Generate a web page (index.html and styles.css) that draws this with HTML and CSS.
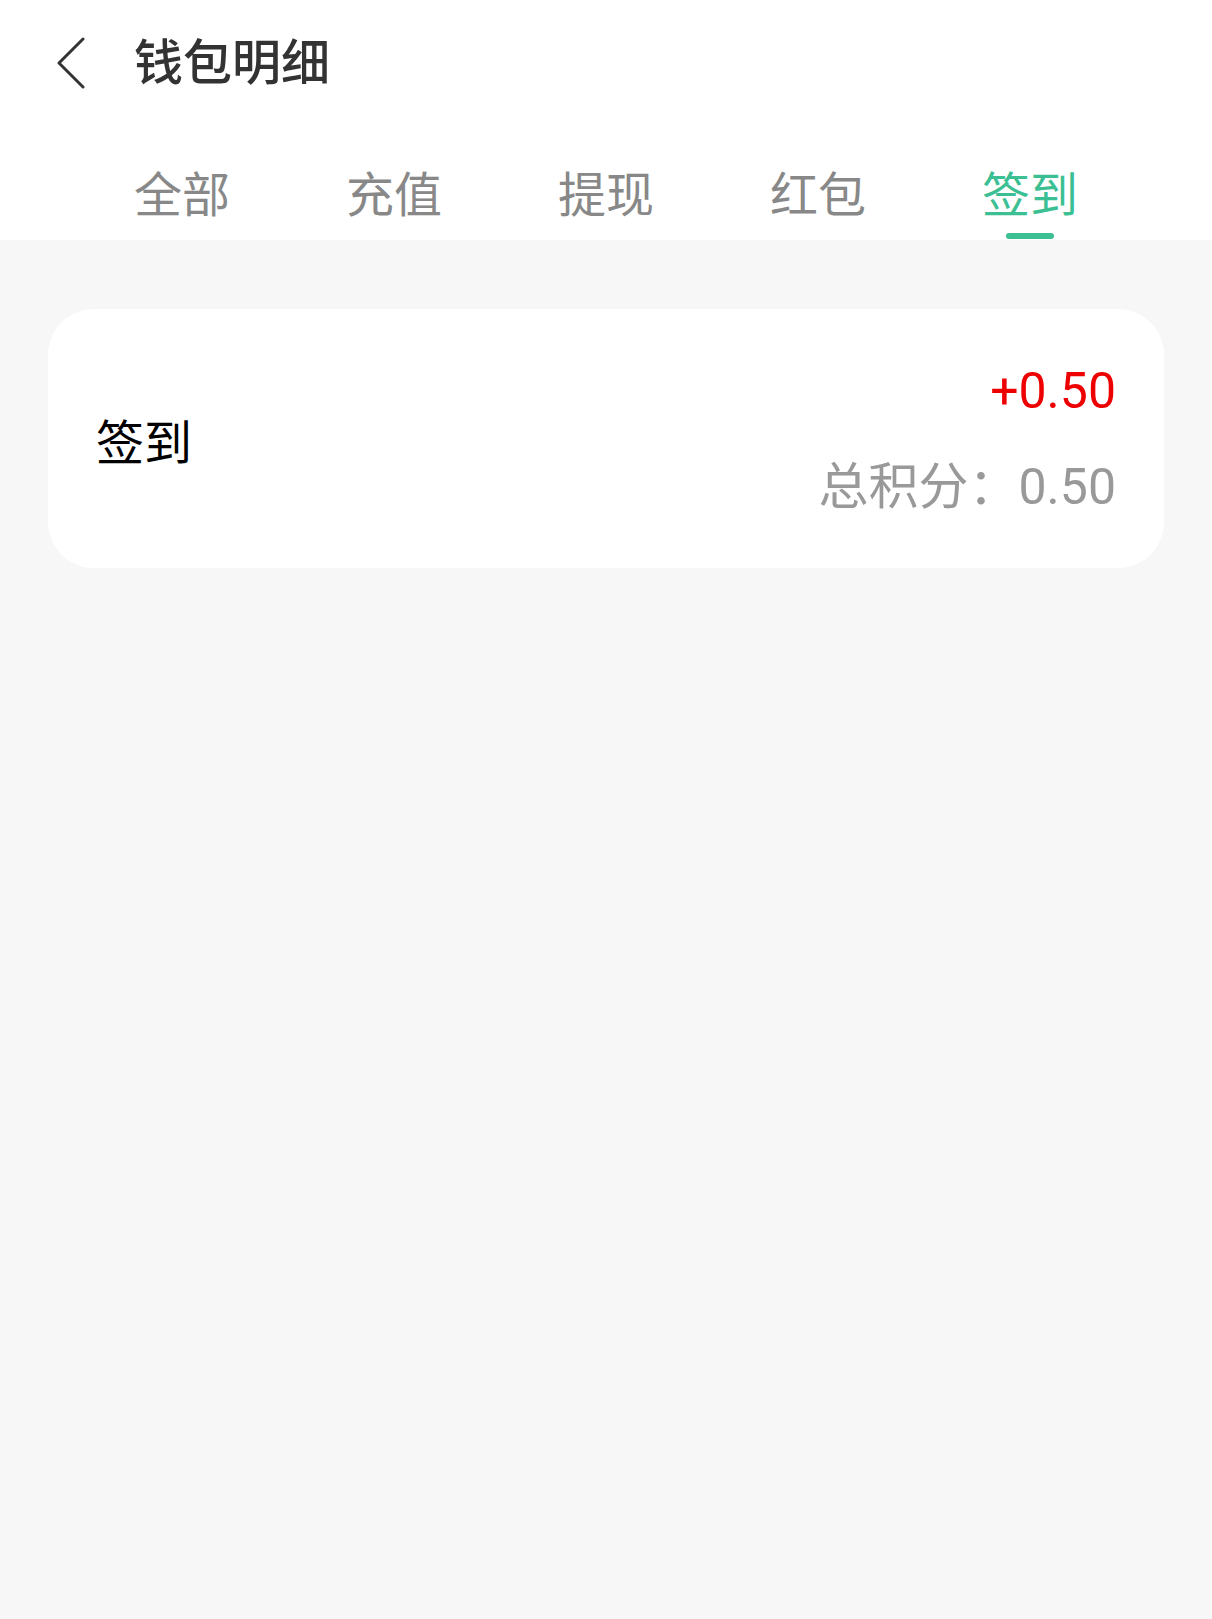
FILE: index.html
```html
<!DOCTYPE html>
<html lang="zh-CN">
  <head>
    <meta charset="UTF-8" />
    <meta name="viewport" content="width=device-width, initial-scale=1.0" />
    <title>钱包明细</title>
    <link rel="stylesheet" href="styles.css">
  </head>
  <body>
    <div class="header">
      <div class="nav-bar">
        <span class="back-btn">
          <svg width="32" height="52" viewBox="0 0 32 52">
            <polyline points="28,2 4,26 28,50" fill="none" stroke="#333" stroke-width="3" stroke-linecap="round" stroke-linejoin="round" />
          </svg>
        </span>
        <h1 class="title">钱包明细</h1>
      </div>

      <div class="tabs">
        <div class="tab">全部</div>
        <div class="tab">充值</div>
        <div class="tab">提现</div>
        <div class="tab">红包</div>
        <div class="tab active">签到</div>
      </div>
    </div>

    <div class="list">
      <div class="record">
        <div class="record-name">签到</div>
        <div class="record-right">
          <div class="amount">+0.50</div>
          <div class="total">总积分：0.50</div>
        </div>
      </div>
    </div>
  </body>
</html>
```

FILE: styles.css
```css
body {
  margin: 0;
  font-family: Roboto, "Noto Sans CJK SC", sans-serif;
  background: #f7f7f7;
  min-height: 100vh;
}

.header {
  background: white;
}

.nav-bar {
  height: 126px;
  display: flex;
  align-items: center;
  padding-left: 55px;
}

.back-btn {
  display: flex;
  width: 32px;
  margin-right: 47px;
}

.title {
  margin: 0;
  font-size: 49px;
  font-weight: 500;
  color: #333;
  line-height: 1;
}

.tabs {
  display: flex;
  padding: 36px 76px 1px;
}

.tab {
  flex: 1;
  display: flex;
  flex-direction: column;
  align-items: center;
  font-size: 48px;
  line-height: 67px;
  color: #888;
}

.tab::after {
  content: "";
  width: 48px;
  height: 6px;
  margin-top: 4px;
  border-radius: 3px;
  background: transparent;
}

.tab.active {
  color: #3cbf93;
}

.tab.active::after {
  background: #3cbf93;
}

.list {
  padding: 69px 48px;
}

.record {
  background: white;
  border-radius: 46px;
  height: 259px;
  padding: 0 48px;
  box-sizing: border-box;
  display: flex;
  align-items: center;
  justify-content: space-between;
}

.record-name {
  font-size: 48px;
  color: #000;
}

.record-right {
  text-align: right;
  font-size: 50px;
}

.amount {
  color: #ee0000;
  line-height: 66px;
  margin-bottom: 30px;
}

.total {
  color: #999;
  line-height: 66px;
}
```
